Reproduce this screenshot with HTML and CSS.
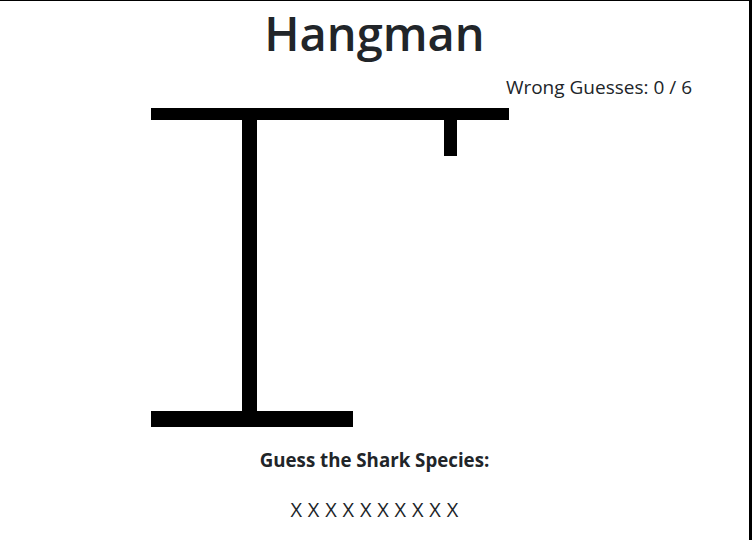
FILE: index.html
```html
<!DOCTYPE html>
<html lang="en">

<head>
  <meta charset="UTF-8" />
  <meta name="viewport" content="width=device-width, initial-scale=1.0" />
  <title>Hangman</title>
  <link rel="stylesheet" href="styles.css">
</head>

<body>
  <div class="frame">
    <h1 class="title">Hangman</h1>

    <p class="status">Wrong Guesses: <span id="wrong">0</span> / 6</p>

    <div class="board">
      <!-- gallows: beam, rope, pole and base -->
      <svg class="gallows" width="358" height="319" viewBox="0 0 358 319">
        <rect x="0" y="0" width="358" height="12" fill="#000" />
        <rect x="293" y="12" width="13" height="36" fill="#000" />
        <rect x="91" y="12" width="15" height="292" fill="#000" />
        <rect x="0" y="303" width="202" height="16" fill="#000" />
      </svg>
    </div>

    <h5 class="prompt">Guess the Shark Species:</h5>
    <p class="word" id="word">X X X X X X X X X X</p>
  </div>
</body>

</html>
```

FILE: styles.css
```css
body {
  margin: 0;
  font-family: "Open Sans", "Noto Sans", sans-serif;
  color: #212529;
  background: #fff;
}
.frame {
  border-top: 1px solid #000;
  border-right: 3px solid #000;
  height: 539px;
  overflow: hidden;
}
.title {
  margin: 4px 0 0;
  font-size: 47px;
  font-weight: 600;
  line-height: 56px;
  text-align: center;
}
.status {
  margin: 14px 0 0;
  padding-right: 57px;
  font-size: 19px;
  line-height: 24px;
  text-align: right;
}
.board {
  margin-top: 9px;
  padding-left: 151px;
  line-height: 0;
}
.prompt {
  margin: 21px 0 0;
  font-size: 18.7px;
  font-weight: 700;
  line-height: 24px;
  text-align: center;
}
.word {
  margin: 26px 0 0;
  font-size: 20px;
  line-height: 24px;
  letter-spacing: 0.3px;
  text-align: center;
}
```
